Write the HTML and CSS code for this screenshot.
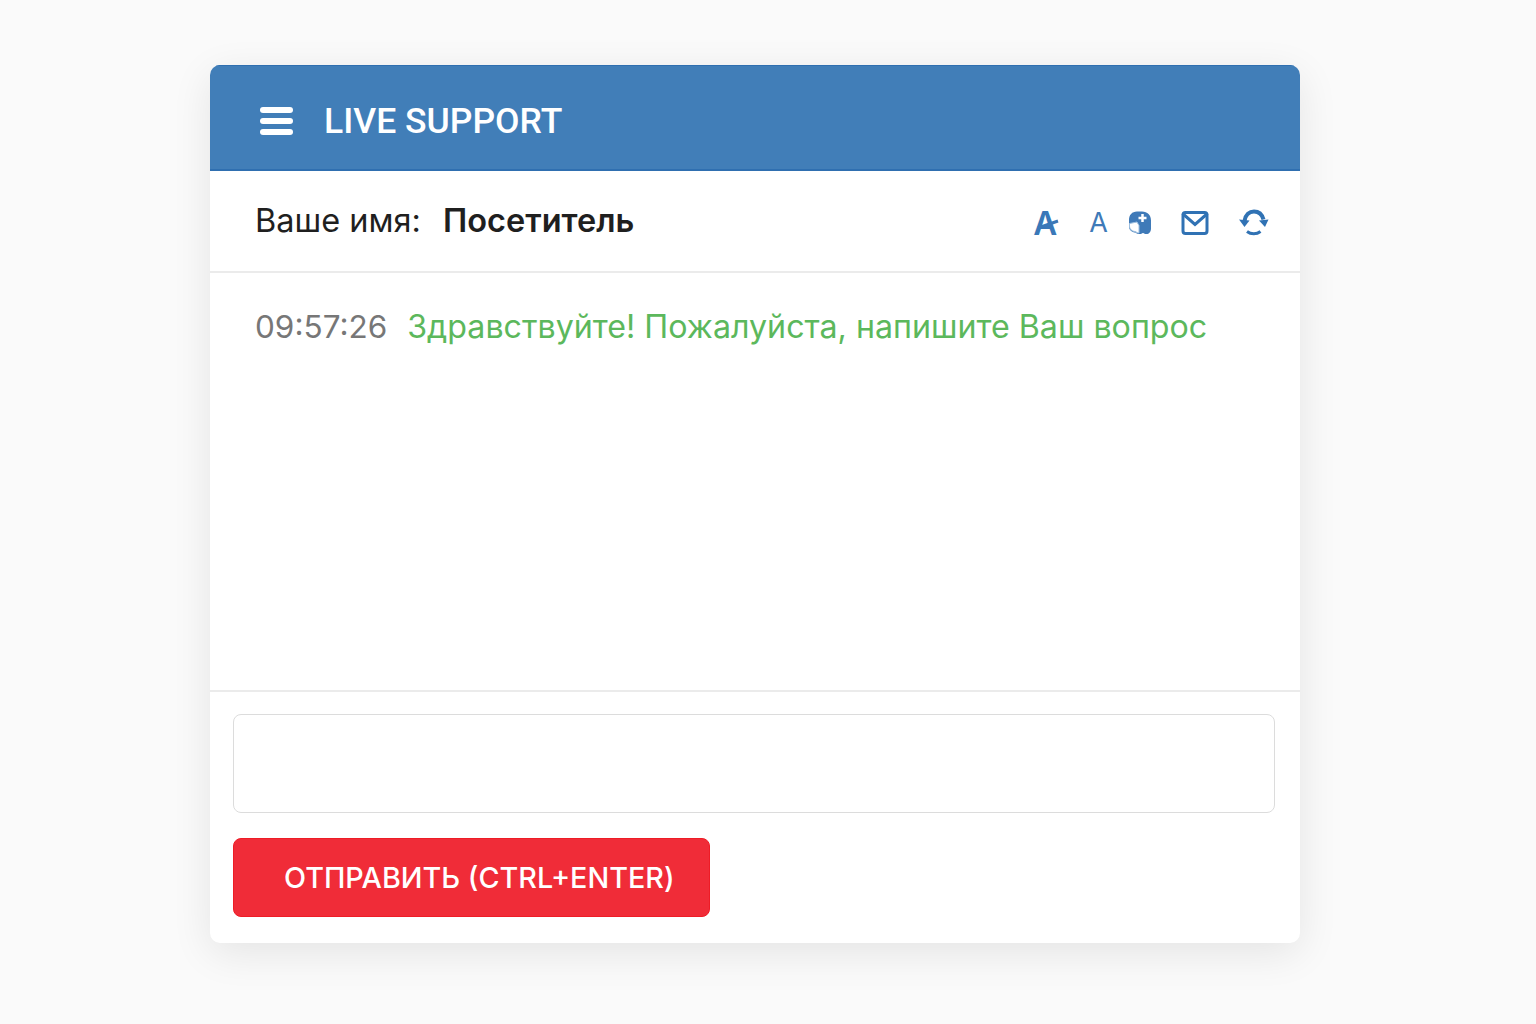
FILE: index.html
```html
<!DOCTYPE html>
<html lang="ru">

<head>
    <meta charset="utf-8">
    <title>Live Support</title>
    <link rel="stylesheet" href="styles.css">
</head>

<body>
    <div class="chat">
        <div class="chat-header">
            <svg class="menu-icon" width="36" height="32" viewBox="0 0 36 32">
                <rect x="1" y="2" width="33" height="6" rx="3" />
                <rect x="1" y="13" width="33" height="6" rx="3" />
                <rect x="1" y="24" width="33" height="6" rx="3" />
            </svg>
            <span class="chat-title">LIVE SUPPORT</span>
        </div>

        <div class="chat-toolbar">
            <div class="visitor">
                <span class="visitor-label">Ваше имя:</span>
                <span class="visitor-name">Посетитель</span>
            </div>
            <div class="tools">
                <span class="tool-a tool-a-big">A
                    <svg class="tool-a-slash" width="26" height="26" viewBox="0 0 26 26">
                        <path d="M5 18 L25 11" />
                    </svg>
                </span>
                <span class="tool-a">A</span>
                <svg class="tool-bubble" width="26" height="26" viewBox="0 0 26 26">
                    <path fill="#3f7ab8" d="M10 1.500h5c5.500 0 9 3.500 9 9v8c0 3.500-2 5.500-4.500 5.500-1.500 0-2.500-.5-3.500-1-1 .5-2 1-3.500 1-1.500 0-3-.5-4-1.500-3.500 0-6.500-2.500-6.500-6v-6.500C2 5 5 1.500 10 1.500z" />
                    <path fill="#fff" stroke="#9dbfe0" stroke-width="1" d="M2.500 13.500l7.500-1.500 2 3.500v7.500c-1.500 0-2.500-.5-3.500-1.500-3 0-6-2-6-5.500z" />
                    <path fill="none" stroke="#fff" stroke-width="2.500" d="M15.500 4v8M11.500 8h8" />
                </svg>
                <svg class="tool-mail" width="28" height="26" viewBox="0 0 28 26">
                    <rect x="2" y="2.500" width="24" height="21" rx="2.500" />
                    <path d="M1.500 3.500 L14 14.500 L26.500 3.500" />
                </svg>
                <svg class="tool-refresh" width="32" height="28" viewBox="0 0 32 28">
                    <path class="arc" d="M6.500 13C7.500 6.500 11.500 3.500 16 3.500c4.500 0 8 2.500 9.500 8" />
                    <path class="arc arc-low" d="M9 23.500c2 1.500 4.300 2.200 6.800 2.200 2.400 0 4.700-.7 6.700-2.200" />
                    <path class="head" d="M1 11.500l10.500 1-5 6.500z" />
                    <path class="head" d="M30.500 11.500l-9.500 1 6 6.500z" />
                </svg>
            </div>
        </div>

        <div class="chat-messages">
            <div class="message">
                <span class="message-time">09:57:26</span>
                <span class="message-text">Здравствуйте! Пожалуйста, напишите Ваш вопрос</span>
            </div>
        </div>

        <div class="chat-form">
            <textarea class="chat-input"></textarea>
            <button class="chat-send" type="button">ОТПРАВИТЬ (CTRL+ENTER)</button>
        </div>
    </div>
</body>

</html>
```

FILE: styles.css
```css
* {
    box-sizing: border-box;
}

body {
    margin: 0;
    min-height: 1024px;
    background-color: #fafafa;
    font-family: Inter, "Liberation Sans", sans-serif;
    padding-top: 65px;
}

.chat {
    width: 1090px;
    height: 878px;
    margin-left: 210px;
    background-color: #fff;
    border-radius: 10px;
    box-shadow: 0 10px 40px rgba(0, 0, 0, 0.09);
    display: flex;
    flex-direction: column;
    overflow: hidden;
}

.chat-header {
    height: 106px;
    background-color: #417eb8;
    border-top: 1px solid #2f6fb0;
    border-bottom: 2px solid #2f6fb0;
    display: flex;
    align-items: center;
    padding: 7px 0 0 49px;
    color: #fff;
}

.menu-icon {
    fill: #fff;
    margin-right: 31px;
}

.chat-title {
    font-family: Roboto, sans-serif;
    font-size: 35.5px;
    font-weight: 500;
    margin-left: -2px;
}

.chat-toolbar {
    height: 102px;
    border-bottom: 2px solid #ebebeb;
    display: flex;
    align-items: center;
    justify-content: space-between;
    padding: 0 30px 2px 45px;
}

.visitor {
    font-size: 32.5px;
    color: #1f1f1f;
}

.visitor-label {
    margin-right: 13px;
}

.visitor-name {
    font-weight: 600;
}

.tools {
    display: flex;
    align-items: center;
    color: #3f7ab8;
    padding-top: 6px;
}

.tool-a {
    font-size: 27px;
    position: relative;
    margin-right: 19px;
    line-height: 26px;
}

.tool-a-big {
    font-size: 33px;
    font-weight: 600;
    margin-right: 32px;
    color: #3a78b8;
}

.tool-a-slash {
    position: absolute;
    left: 0;
    top: 0;
    fill: none;
    stroke: #3a78b8;
    stroke-width: 3;
}

.tool-bubble {
    margin-right: 28px;
}

.tool-mail {
    fill: none;
    stroke: #3072b4;
    stroke-width: 3;
    margin-right: 29px;
}

.tool-refresh {
    margin-top: -2px;
}

.tool-refresh .arc {
    fill: none;
    stroke: #3072b4;
    stroke-width: 4;
}

.tool-refresh .arc-low {
    stroke-width: 3;
}

.tool-refresh .head {
    fill: #3072b4;
}

.chat-messages {
    flex: 1;
    padding: 34px 45px;
    border-bottom: 2px solid #ebebeb;
}

.message {
    font-size: 32.2px;
    display: flex;
    gap: 20px;
}

.message-time {
    color: #777;
    font-size: 31.5px;
}

.message-text {
    color: #5cb85c;
}

.chat-form {
    height: 251px;
    padding: 22px 25px 26px 23px;
    display: flex;
    flex-direction: column;
    align-items: flex-start;
}

.chat-input {
    width: 100%;
    height: 99px;
    border: 1.5px solid #dcdcdc;
    border-radius: 8px;
    resize: none;
    margin-bottom: 25px;
    background-color: #fff;
}

.chat-send {
    width: 477px;
    height: 79px;
    background-color: #f02c38;
    border: 1px solid #ee1c26;
    border-radius: 8px;
    color: #fff;
    font-family: Inter, sans-serif;
    font-size: 28.75px;
    font-weight: 500;
    padding: 0 0 0 50px;
    text-align: left;
}
```
